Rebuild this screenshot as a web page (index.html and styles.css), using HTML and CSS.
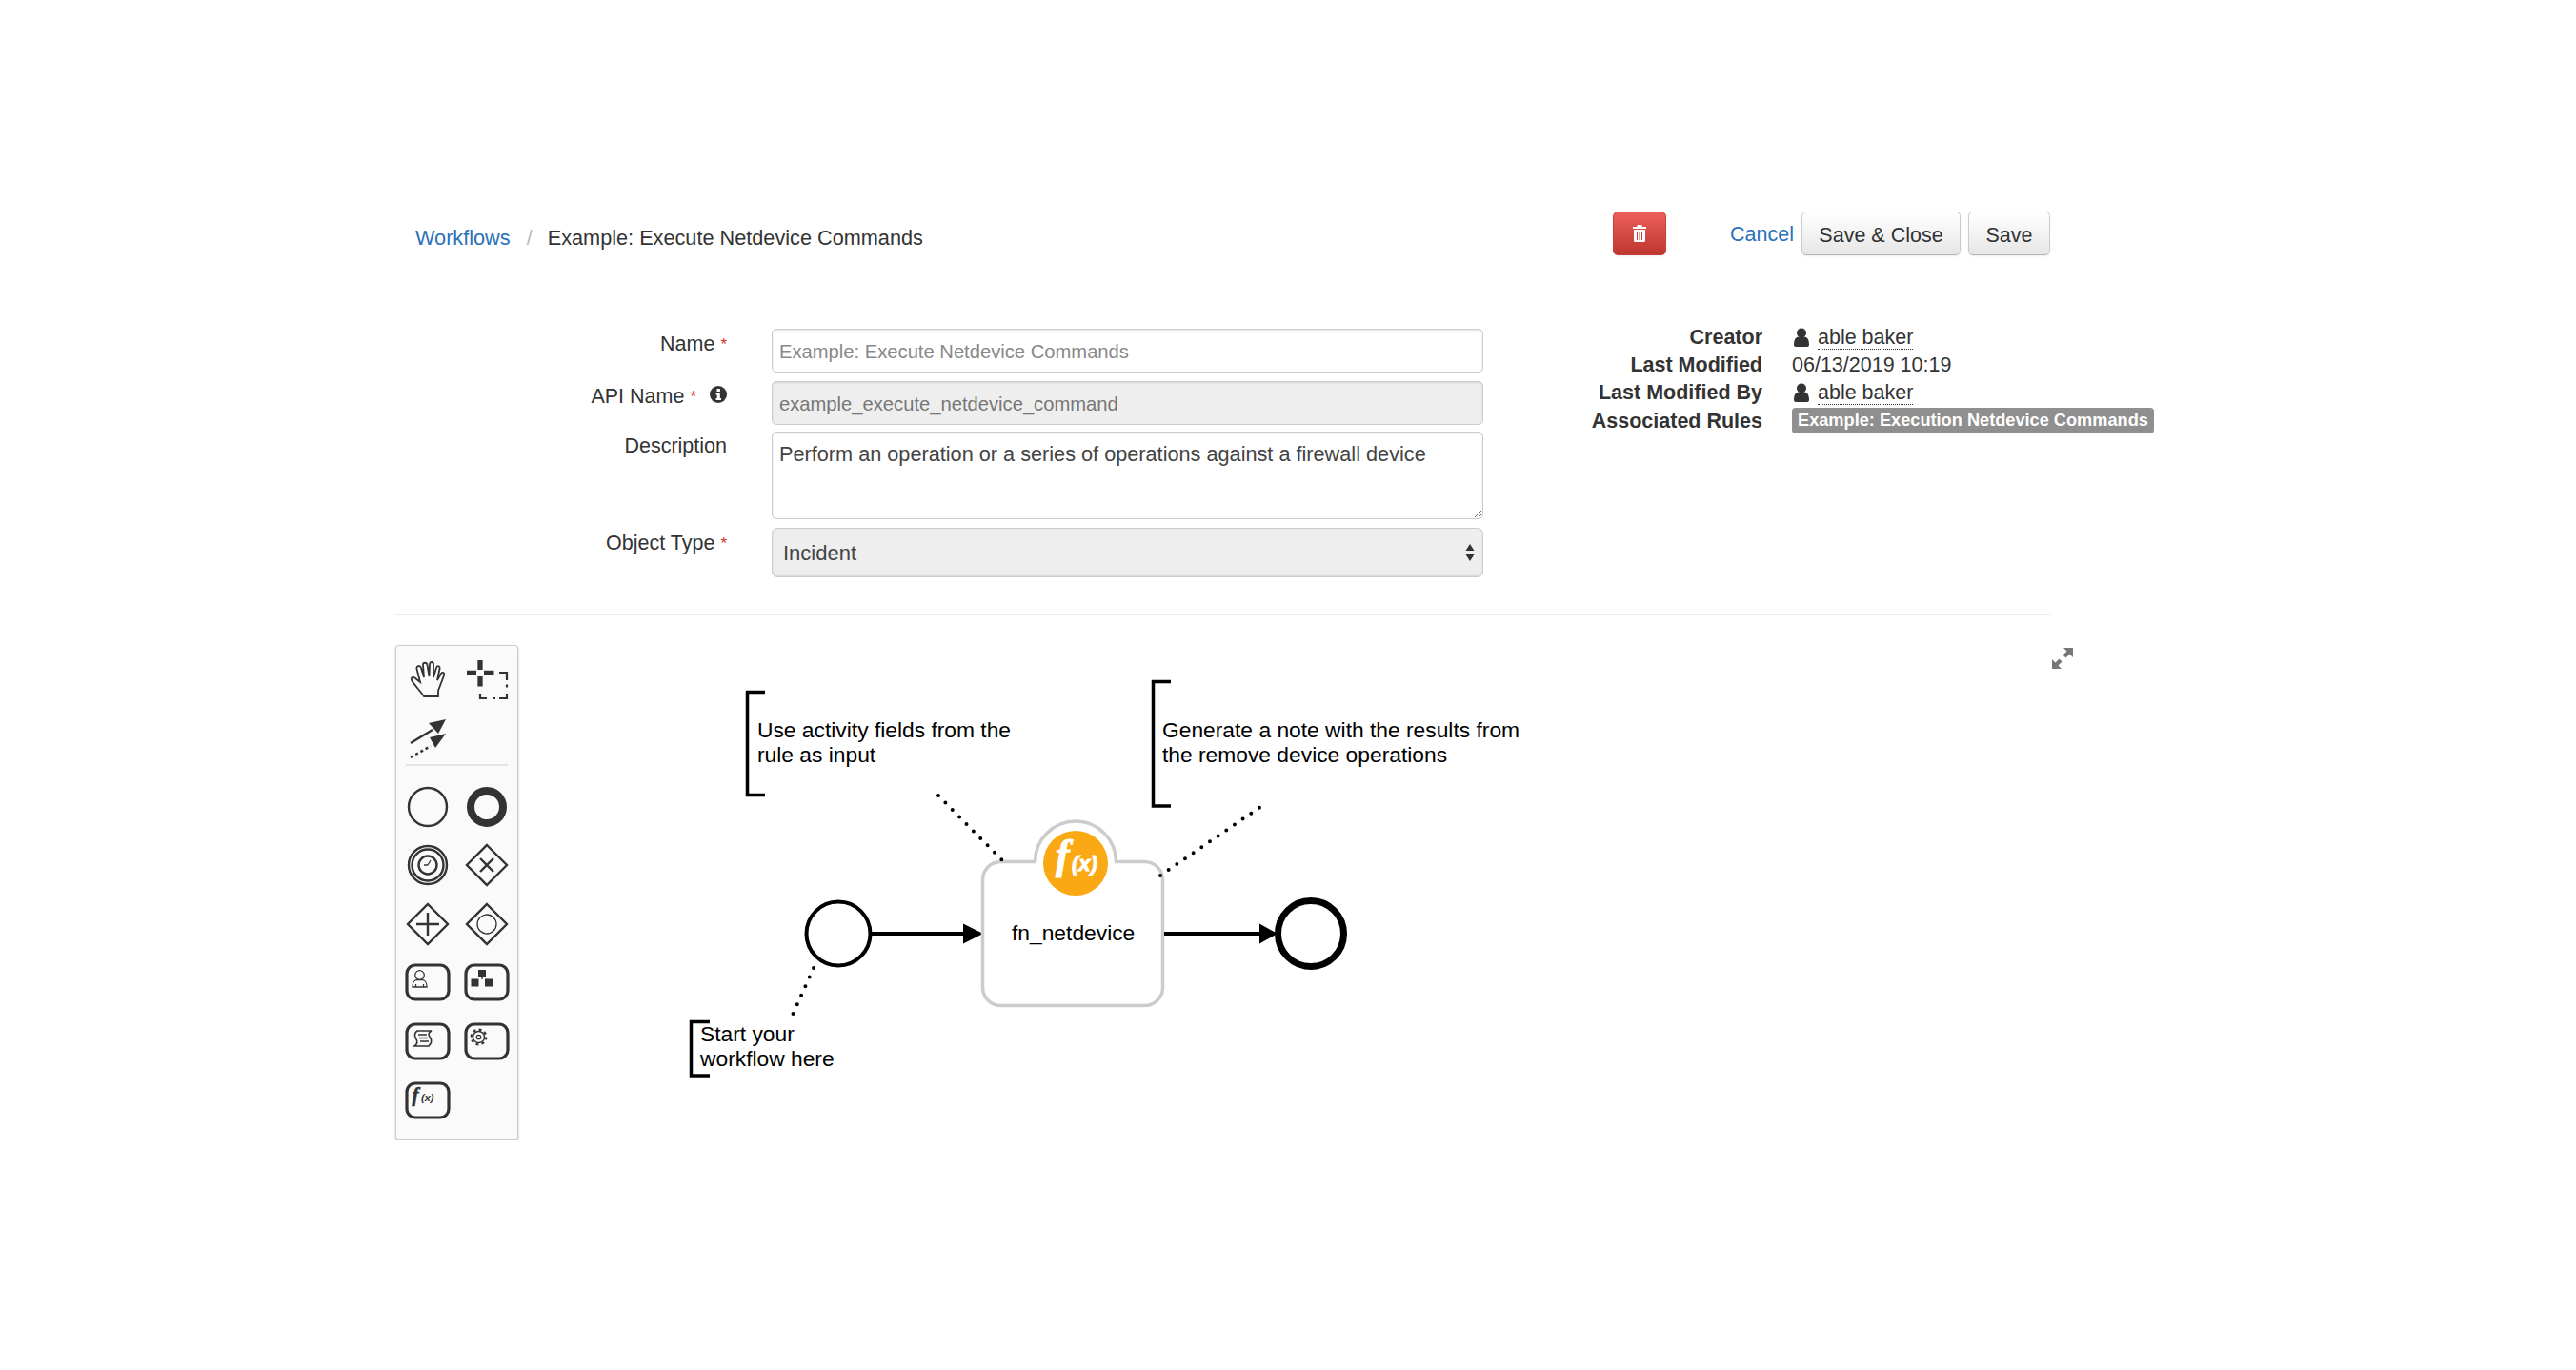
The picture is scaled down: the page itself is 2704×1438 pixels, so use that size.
FILE: index.html

```html
<!DOCTYPE html>
<html lang="en">
<head>
  <meta charset="UTF-8">
  <title>Example: Execute Netdevice Commands</title>
  <link rel="stylesheet" href="styles.css">
</head>
<body>

<div class="page">

  <header class="top-bar">
    <nav class="crumbs">
      <a href="#">Workflows</a>
      <span class="crumb-sep">/</span>
      <span>Example: Execute Netdevice Commands</span>
    </nav>
    <div class="actions">
      <button class="btn btn-danger" aria-label="Delete">
        <svg class="trash" viewBox="0 0 14 18"><path d="M5 0h4l1 2h4v2H0V2h4zM1 5h12v11.500a1.500 1.500 0 0 1-1.500 1.500h-9A1.500 1.500 0 0 1 1 16.500z" fill="#fff"/><path d="M4.500 7v9M7 7v9M9.500 7v9" stroke="#c9413c" stroke-width="1"/></svg>
      </button>
      <a class="cancel" href="#">Cancel</a>
      <button class="btn btn-close">Save &amp; Close</button>
      <button class="btn btn-save">Save</button>
    </div>
  </header>

  <section class="details">
    <form class="fields">
      <label class="field-label">Name <em>*</em></label>
      <input class="field" type="text" placeholder="Example: Execute Netdevice Commands">

      <label class="field-label">API Name <em>*</em>
        <svg class="info" viewBox="0 0 18 18"><circle cx="9" cy="9" r="9" fill="#333"/><rect x="7.500" y="3" width="3.400" height="3" fill="#fff"/><path d="M6.500 7.500h4.300V13h1.200v2H6.500v-2h1.200V9.500H6.500z" fill="#fff"/></svg>
      </label>
      <input class="field field-off" type="text" value="example_execute_netdevice_command" disabled>

      <label class="field-label">Description</label>
      <textarea class="field field-area">Perform an operation or a series of operations against a firewall device</textarea>

      <label class="field-label">Object Type <em>*</em></label>
      <div class="select-wrap">
        <select class="field-select"><option>Incident</option></select>
        <svg class="select-arrows" viewBox="0 0 10 18"><path d="M5 0l4.500 7h-9zM5 18l-4.500-7h9z" fill="#333"/></svg>
      </div>
    </form>

    <dl class="meta">
      <dt>Creator</dt>
      <dd><svg class="user" viewBox="0 0 16 20"><circle cx="8" cy="5.500" r="5" fill="#333"/><path d="M0 18c0-5 1.500-8 5-8.500h6c3.500 .5 5 3.500 5 8.500 0 1-1 2-2 2H2c-1 0-2-1-2-2z" fill="#333"/></svg><span class="who">able baker</span></dd>
      <dt>Last Modified</dt>
      <dd>06/13/2019 10:19</dd>
      <dt>Last Modified By</dt>
      <dd><svg class="user" viewBox="0 0 16 20"><circle cx="8" cy="5.500" r="5" fill="#333"/><path d="M0 18c0-5 1.500-8 5-8.500h6c3.500 .5 5 3.500 5 8.500 0 1-1 2-2 2H2c-1 0-2-1-2-2z" fill="#333"/></svg><span class="who">able baker</span></dd>
      <dt>Associated Rules</dt>
      <dd><span class="badge">Example: Execution Netdevice Commands</span></dd>
    </dl>
  </section>

  <hr class="rule">

  <section class="editor">
    <aside class="palette">
      <div class="tools">
        <svg viewBox="0 0 56 56"><path class="hand" d="M24 46C20 40 14 34 11 29c-1-3 2-4 4-2l5 4-3.500-14c-.5-3.500 3.500-4 4.500-1l3 10-1-13c0-3 4-3 4.500 0l2 12 .5-13c.5-3 4-2.500 4 .5V26l3-10c1-3 4-2 3.500 1L38 29l4-7c1.500-2 4-1 3 2l-6 16v6z"/></svg>
        <svg viewBox="0 0 56 56"><path d="M21 8v10M21 25v10.500M7 21.300h10M25 21.300h10.500" stroke="#333" stroke-width="5.300" fill="none"/><path d="M41 21h8v8M49 33.500v3M49 43v5h-8M37 48h-3M28 48h-7v-5" stroke="#333" stroke-width="2.200" fill="none"/></svg>
        <svg viewBox="0 0 56 56"><path d="M10 33L33 19" stroke="#333" stroke-width="2.500"/><path d="M47 8L29 12l10 11z" fill="#333"/><path d="M10 48L31 36" stroke="#333" stroke-width="2.500" stroke-dasharray="3 3"/><path d="M47 23L30 27l6 11z" fill="#333"/></svg>
        <span></span>
      </div>
      <div class="palette-line"></div>
      <div class="tools">
        <svg viewBox="0 0 56 56"><circle class="ln" cx="28" cy="28" r="20"/></svg>
        <svg viewBox="0 0 56 56"><circle cx="28" cy="28" r="17" fill="none" stroke="#333" stroke-width="8"/></svg>

        <svg viewBox="0 0 56 56"><circle class="ln" cx="28" cy="28" r="20"/><circle class="ln" cx="28" cy="28" r="16.500"/><circle class="ln" cx="28" cy="28" r="9.500"/><path class="thin" d="M28 28l3-5M28 28h-4"/></svg>
        <svg viewBox="0 0 56 56"><path class="ln" d="M28 7l21 21-21 21L7 28z"/><path class="ln" d="M21 21l14 14M35 21L21 35"/></svg>

        <svg viewBox="0 0 56 56"><path class="ln" d="M28 7l21 21-21 21L7 28z"/><path class="ln" d="M28 16v24M16 28h24"/></svg>
        <svg viewBox="0 0 56 56"><path class="ln" d="M28 7l21 21-21 21L7 28z"/><circle class="thin" cx="28" cy="28" r="10"/></svg>

        <svg viewBox="0 0 56 56"><rect class="task" x="6" y="10" width="44" height="36" rx="9"/><circle class="thin" cx="19.500" cy="20.500" r="4.800"/><path class="thin" d="M12 33c0-4 .5-6 4-7.500h7c3.500 1.500 4 3.500 4 7.500zM15.500 33v-3M23.500 33v-3"/></svg>
        <svg viewBox="0 0 56 56"><rect class="task" x="6" y="10" width="44" height="36" rx="9"/><path d="M19 15h8v8h-8zM11.500 24.500h8v8h-8zM26 24.500h8v8h-8z" fill="#333"/><path class="thin" d="M23 23v2"/></svg>

        <svg viewBox="0 0 56 56"><rect class="task" x="6" y="10" width="44" height="36" rx="9"/><path class="script" d="M17 17h15c-4 2-3.500 4-1.500 7 2 3 1.500 6-1.500 9H14c3-2 3.500-5 1.500-8-1.500-3-1.500-6 1.500-8zM18 21h9M19 24.500h9M20 28h9"/></svg>
        <svg viewBox="0 0 56 56"><rect class="task" x="6" y="10" width="44" height="36" rx="9"/><circle cx="19.500" cy="23.500" r="6" fill="none" stroke="#333" stroke-width="1.500"/><circle cx="19.500" cy="23.500" r="7.800" fill="none" stroke="#333" stroke-width="2.200" stroke-dasharray="3 3.100"/><circle class="thin" cx="19.500" cy="23.500" r="2.200"/></svg>

        <svg viewBox="0 0 56 56"><rect class="task" x="6" y="10" width="44" height="36" rx="9"/><text class="fx-f" x="11.500" y="29" font-size="21">f</text><text class="fx-x" x="21" y="28.500" font-size="11">(x)</text></svg>
      </div>
    </aside>

    <!-- free canvas, viewBox uses page coordinates -->
    <svg class="diagram" viewBox="544 677 1200 520" width="1200" height="520">
      <path class="bracket" d="M803 726.500H784.500V834.500H803"/>
      <text class="note"><tspan x="795" y="774">Use activity fields from the</tspan><tspan x="795" y="800">rule as input</tspan></text>

      <path class="bracket" d="M1229 715.500H1210.500V846H1229"/>
      <text class="note"><tspan x="1220" y="774">Generate a note with the results from</tspan><tspan x="1220" y="800">the remove device operations</tspan></text>

      <path class="bracket" d="M745 1072.500H725.500V1129H745"/>
      <text class="note"><tspan x="735" y="1093">Start your</tspan><tspan x="735" y="1119">workflow here</tspan></text>

      <circle class="start" cx="880" cy="980" r="33.500"/>
      <path class="flow" d="M915 980H1012"/>
      <path d="M1011 969.500L1032 980L1011 990.500z"/>

      <path class="task-box" d="M1050 904.500H1086.500A42.500 42.500 0 0 1 1171.500 904.500H1201.500A19 19 0 0 1 1220.500 923.500V1036.500A19 19 0 0 1 1201.500 1055.500H1050.500A19 19 0 0 1 1031.500 1036.500V923.500A19 19 0 0 1 1050 904.500z"/>
      <circle cx="1129" cy="906" r="34" fill="#faa813"/>
      <text class="fx-f fx-white" x="1108" y="912" font-size="44">f</text>
      <text class="fx-x fx-white" x="1125" y="913.500" font-size="22">(x)</text>
      <text class="note" x="1062" y="986.500">fn_netdevice</text>

      <path class="flow" d="M1222 980H1323"/>
      <path d="M1322 969.500L1341 980L1322 990.500z"/>
      <circle class="end" cx="1376" cy="980" r="34.500"/>

      <!-- associations sit on top of the task border -->
      <path class="dots" d="M985 835L1052 903"/>
      <path class="dots" d="M1218 919L1323 847"/>
      <path class="dots" d="M854 1016L832 1065"/>
    </svg>

    <svg class="expand" viewBox="0 0 22 22"><path d="M12 0h10v10l-3.500-3.500-4 4-3-3 4-4zM10 22H0V12l3.500 3.500 4-4 3 3-4 4z" fill="#777"/></svg>
  </section>

</div>

</body>
</html>
```

FILE: styles.css

```css
body { font-family: "Liberation Sans", Arial, sans-serif; font-size: 21.500px; color: #333; background: #fff; margin: 0; }
.page { width: 1738px; margin-left: 414px; padding-top: 222px; }
a { color: #2a71b8; text-decoration: none; }

/* top bar */
.top-bar { display: flex; justify-content: space-between; height: 46px; }
.crumbs { padding: 4px 0 0 22px; font-size: 21.700px; line-height: 48px; height: 48px; }
.crumb-sep { color: #bbb; margin: 0 10px 0 11px; }
.actions { display: flex; align-items: center; }
.btn { height: 46px; border: 1px solid #ccc; border-bottom-color: #b5b5b5; border-radius: 5px; font-family: inherit; font-size: 21.500px; color: #333; background: linear-gradient(#fff, #e6e6e6); box-shadow: 0 1px 2px rgba(0,0,0,.08); padding: 4px 0 0; }
.btn-danger { width: 56px; margin-right: 67px; padding: 0; background: linear-gradient(#ee5f5b, #bd362f); border-color: #c9413c; display: flex; align-items: center; justify-content: center; }
.trash { width: 14px; height: 18px; }
.cancel { margin-right: 8px; position: relative; top: 1px; }
.btn-close { width: 167px; margin-right: 8px; }
.btn-save { width: 86px; }

/* form */
.details { display: flex; margin-top: 77px; }
.fields { display: grid; grid-template-columns: 349px 747px; column-gap: 47px; row-gap: 9px; width: 1143px; flex-shrink: 0; }
.field-label { text-align: right; line-height: 30px; font-size: 21.500px; padding-top: 1px; }
.field-label em { color: #c33; font-style: normal; font-size: 17px; vertical-align: 1px; }
.info { width: 18px; height: 18px; margin-left: 8px; vertical-align: 0; }
.field { box-sizing: border-box; width: 747px; height: 46px; border: 1px solid #ccc; border-radius: 5px; box-shadow: inset 0 1px 2px rgba(0,0,0,.12); font-family: inherit; font-size: 20.200px; color: #444; padding: 2px 7px 0; margin: 0; background: #fff; }
.field::placeholder { color: #888; opacity: 1; }
.field-off { background: #eee; color: #777; }
.field-area { height: 92px; margin-top: -2px; padding: 10px 7px 8px; resize: vertical; line-height: 26px; font-size: 21.700px; }
.field-label:nth-of-type(3) { margin-top: -3px; }
.select-wrap { position: relative; height: 52px; }
.field-select { box-sizing: border-box; width: 747px; height: 52px; appearance: none; border: 1px solid #ccc; border-radius: 6px; background: #eee; box-shadow: inset 0 -1px 2px rgba(0,0,0,.1); font-family: inherit; font-size: 22px; color: #444; padding: 0 11px; }
.select-arrows { position: absolute; right: 9px; top: 17px; width: 10px; height: 18px; }

/* meta panel */
.meta { display: grid; grid-template-columns: 250px auto; column-gap: 31px; grid-auto-rows: 29.200px; margin: -5px 0 0 43px; line-height: 29.200px; font-size: 21.500px; justify-content: start; align-content: start; }
.meta dt { font-weight: bold; text-align: right; }
.meta dd { margin: 0; white-space: nowrap; }
.user { width: 16px; height: 20px; margin: 0 9px 0 2px; vertical-align: -3px; }
.who { border-bottom: 1px dotted #333; }
.badge { display: inline-block; background: #8f8f8f; color: #fff; font-weight: bold; font-size: 18.200px; line-height: 27px; padding: 0 6px; border-radius: 4px; vertical-align: 2px; }

.rule { border: 0; border-top: 1px solid #eee; margin: 39px 0 31px; }

/* editor */
.editor { position: relative; display: flex; align-items: flex-start; }
.palette { box-sizing: border-box; width: 129px; height: 520px; margin-left: 1px; background: #fafafa; border: 1px solid #ccc; border-radius: 3px; box-shadow: 0 2px 3px rgba(0,0,0,.22); padding: 7px 2px 0; flex-shrink: 0; }
.tools { display: grid; grid-template-columns: 62px 62px; grid-auto-rows: 56px; row-gap: 5.600px; justify-items: center; }
.tools svg { width: 56px; height: 56px; }
.palette-line { height: 2px; background: #e4e4e4; margin: -1px 8px 15px; }
.ln { fill: none; stroke: #333; stroke-width: 2.400; }
.hand { fill: none; stroke: #333; stroke-width: 1.800; }
.thin { fill: none; stroke: #333; stroke-width: 1.300; }
.script { fill: none; stroke: #333; stroke-width: 1.600; }
.task { fill: none; stroke: #333; stroke-width: 3.200; }
.fx-f { font-family: "Liberation Serif", serif; font-weight: bold; font-style: italic; }
.fx-x { font-family: "Liberation Sans", sans-serif; font-style: italic; font-weight: bold; }
.fx-white { fill: #fff; stroke: #fff; stroke-width: 1; }
.tools .fx-f, .tools .fx-x { fill: #333; }
.tools .fx-f { stroke: #333; stroke-width: .6; }

.diagram { display: block; flex-shrink: 0; }
.note { font-family: "Liberation Sans", Arial, sans-serif; font-size: 22.800px; fill: #000; }
.bracket { fill: none; stroke: #000; stroke-width: 3.500; }
.dots { fill: none; stroke: #000; stroke-width: 4; stroke-linecap: round; stroke-dasharray: 0 10.500; }
.flow { fill: none; stroke: #000; stroke-width: 4; }
.start { fill: #fff; stroke: #000; stroke-width: 4; }
.end { fill: #fff; stroke: #000; stroke-width: 7; }
.task-box { fill: #fff; stroke: #ccc; stroke-width: 3.500; }
.expand { position: absolute; left: 1740px; top: 3px; width: 22px; height: 22px; }
```
